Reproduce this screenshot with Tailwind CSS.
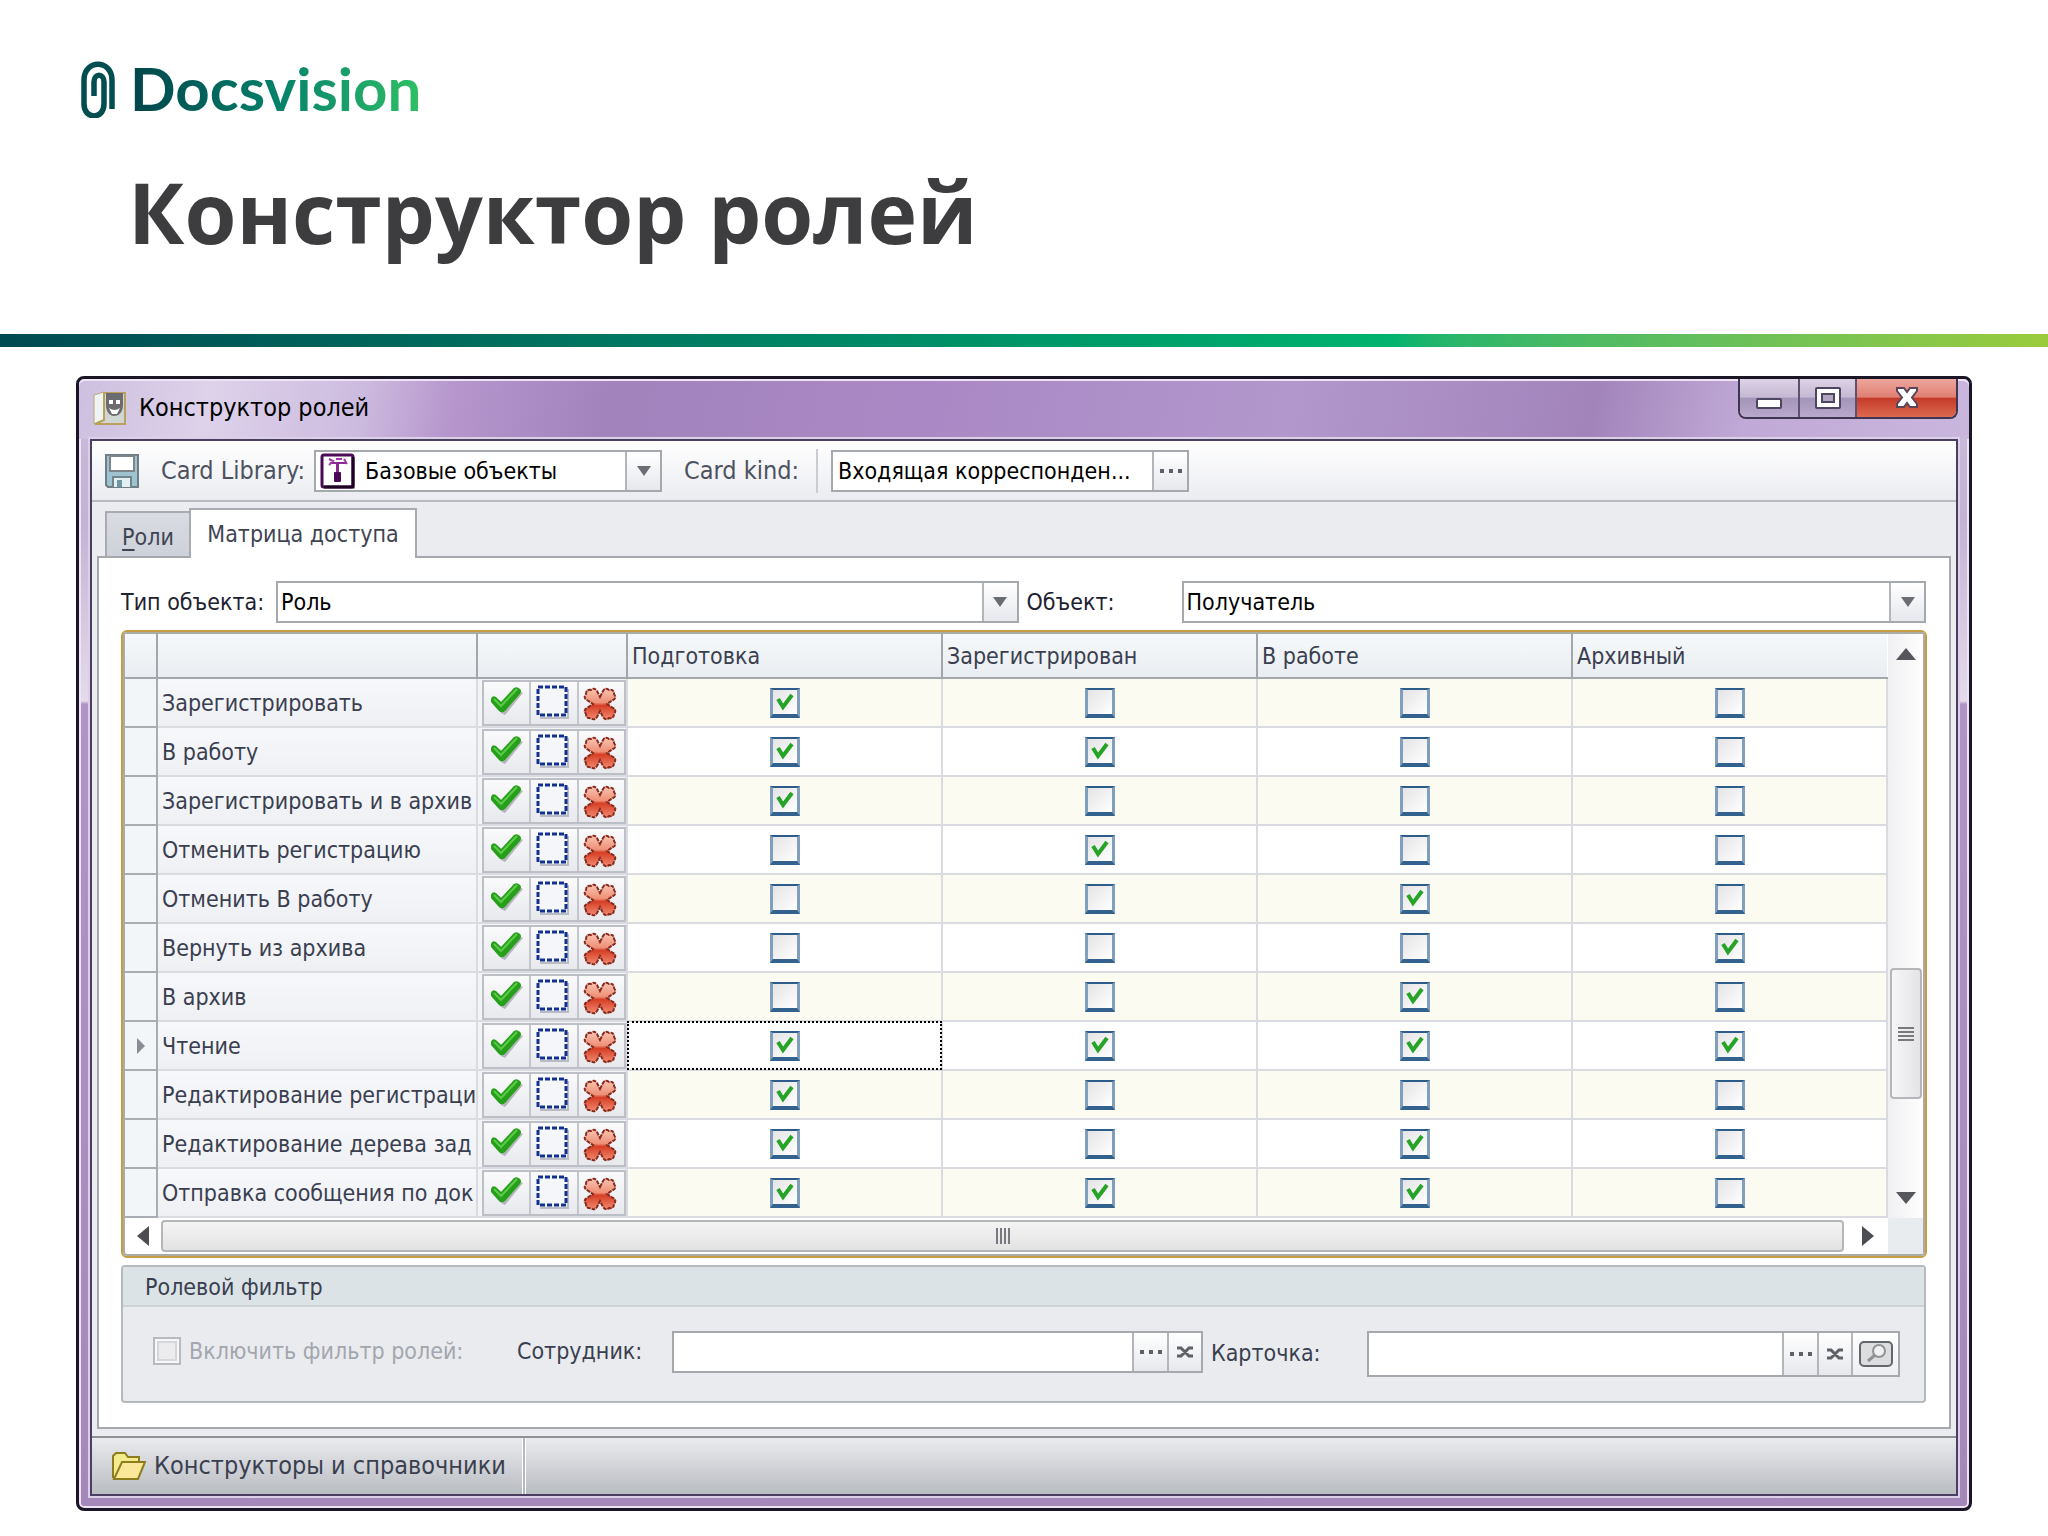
<!DOCTYPE html>
<html lang="ru">
<head>
  <meta charset="UTF-8" />
  <title>Конструктор ролей</title>
  <script src="https://cdn.jsdelivr.net/npm/@tailwindcss/browser@4"></script>
</head>
<body class="bg-white min-h-screen pb-6 font-['DejaVu_Sans_Condensed','Noto_Sans',sans-serif] text-[23px] leading-8 text-[#3a3f50]">

  <header>
    <div class="flex items-center gap-3.5 pl-20 pt-[52px]">
      <svg class="w-9 h-[60px]" viewBox="0 0 36 60" fill="none" stroke="#014d50" stroke-width="5.500">
        <path d="M32 51V22C32 1 4 1 4 22V46C4 62 24 62 24 46V24C24 15 14 15 14 24V38" />
      </svg>
      <span class="font-['Lato',sans-serif] font-bold text-[60px] leading-[72px] bg-linear-to-r from-[#01454b] via-[#04806a] to-[#2fc063] bg-clip-text text-transparent">Docsvision</span>
    </div>
    <h1 class="pl-32 pt-8 pb-[66px] font-['Open_Sans',sans-serif] font-bold text-[84px] leading-[112px] text-[#3d3d3f]">Конструктор ролей</h1>
    <div class="h-[13px] bg-linear-to-r from-[#004a52] via-[#00b36e] via-68% to-[#9acb3b]"></div>
  </header>

  <main class="mx-[76px] mt-[29px] rounded-lg border-[3px] border-[#1b1626] bg-[linear-gradient(#cdbfdc_0px,#c3b2d3_140px,#e4dbec_322px,#b094c8_325px,#a388b9_100%)] shadow-[inset_0_0_0_2px_#eee4f6]">

    <!-- title bar -->
    <div class="flex items-start justify-between pl-3.5 pr-[11px] h-[60px] rounded-t-md shadow-[inset_0_2px_0_#eee4f6] bg-[linear-gradient(100deg,#cdbfdf_0%,#ddd2ea_7%,#cdbbdf_15%,#b595cc_20%,#a283bc_28%,#aa88c5_45%,#b197cc_64%,#a284bb_80%,#c0a9d6_88%,#c9b6dd_100%)]">
      <div class="flex items-center gap-3 pt-3">
        <svg class="w-[34px] h-[34px]" viewBox="0 0 34 34">
          <path d="M1 4L11 1V29L1 33Z" fill="#eef4f2" stroke="#b9a97c" />
          <path d="M11 2H32V33H2L11 29Z" fill="#cfd6d4" stroke="#b9a05c" stroke-width="2" />
          <path d="M13 2H30V14C30 22 25 25 21 25C17 25 13 21 13 14Z" fill="#6b6b70" />
          <path d="M16 9H20V13H16ZM23 9H27V13H23ZM16 17Q21.500 21 27 17L24 23H19Z" fill="#fff" />
        </svg>
        <span class="text-[25px] text-black">Конструктор ролей</span>
      </div>
      <div class="flex h-10 rounded-b-lg border-2 border-t-0 border-[#3f3550] overflow-hidden">
        <button aria-label="Свернуть" class="w-[60px] border-r-2 border-[#5c5270] flex items-center justify-center bg-[linear-gradient(#ddd3e6_0%,#c5b8d3_48%,#a395b8_50%,#b9a9cc_100%)]">
          <svg class="w-7 h-7" viewBox="0 0 28 28"><rect x="2" y="15" width="24" height="9" rx="1" fill="#fff" stroke="#4c4660" stroke-width="2" /></svg>
        </button>
        <button aria-label="Развернуть" class="w-[57px] border-r-2 border-[#5c5270] flex items-center justify-center bg-[linear-gradient(#ddd3e6_0%,#c5b8d3_48%,#a395b8_50%,#b9a9cc_100%)]">
          <svg class="w-7 h-7" viewBox="0 0 28 28" stroke="#4c4660" stroke-width="2"><rect x="2" y="4" width="24" height="20" rx="1" fill="#fff" /><rect x="8" y="10" width="12" height="8" fill="#b1a5c2" /></svg>
        </button>
        <button aria-label="Закрыть" class="w-[99px] flex items-center justify-center bg-[linear-gradient(#eda69c_0%,#e07f73_48%,#c43a28_50%,#dd6a50_100%)]">
          <svg class="w-7 h-7" viewBox="0 0 28 28"><path d="M4 4H11L14 8L17 4H24V7L19 13.500L24 20V23H17L14 19L11 23H4V20L9 13.500L4 7Z" fill="#fff" stroke="#5a4658" stroke-width="2" /></svg>
        </button>
      </div>
    </div>

    <div class="mx-[11px] mb-3 border-2 border-[#4b3f61] bg-[#ebecf0] outline-2 outline-[#dccfe8]">

      <!-- toolbar -->
      <div class="flex items-center h-[61px] pl-[13px] border-b-2 border-[#b7bac0] bg-linear-to-b from-white to-[#ebecf1]">
        <button aria-label="Сохранить">
          <svg class="w-[34px] h-[34px]" viewBox="0 0 34 34">
            <path d="M1 1H33V33H3L1 31Z" fill="#9cc3cf" stroke="#6e7d86" stroke-width="2" />
            <rect x="5" y="2" width="24" height="15" fill="#fff" stroke="#7d8589" stroke-width="2" />
            <path d="M8 33V23H26V33" fill="#e4eff2" stroke="#71858d" stroke-width="2" />
            <rect x="12" y="26" width="5" height="7" fill="#6f95a3" />
          </svg>
        </button>
        <label for="library" class="w-[175px] pl-[22px] whitespace-nowrap text-[25px] text-[#4c5260]">Card Library:</label>
        <div class="flex w-[348px] h-[42px] border-2 border-[#a5a8ad] bg-white">
          <svg class="w-9 h-9 ml-1 mt-px shrink-0" viewBox="0 0 36 36">
            <rect x="2" y="2" width="31" height="32" rx="2" fill="#fff" stroke="#4a0a55" stroke-width="3" />
            <path d="M33 4V34H4" fill="none" stroke="#1d0024" stroke-width="3" />
            <path d="M10 9H26V11H10ZM16 10H19V20H16Z" fill="#8a2a94" />
            <path d="M9 6L13 8L9 12M16 6H22M24 6L27 11" fill="none" stroke="#a03aa8" stroke-width="2" />
            <rect x="14" y="19" width="7" height="10" rx="1" fill="#4a0a55" />
          </svg>
          <select id="library" class="appearance-none min-w-0 flex-1 pl-[9px] text-black"><option>Базовые объекты</option></select>
          <span class="w-[35px] flex items-center justify-center border-l-2 border-[#b2b5ba] bg-linear-to-b from-white to-[#e6e8ed]">
            <svg class="w-4 h-2.5" viewBox="0 0 16 10"><path d="M1 0H15L8 10Z" fill="#6a6d73" /></svg>
          </span>
        </div>
        <label for="kind" class="w-[154px] pl-[22px] whitespace-nowrap text-[25px] text-[#4c5260]">Card kind:</label>
        <span class="w-[15px] h-11 border-l-2 border-[#c9ccd2]"></span>
        <div class="flex w-[358px] h-[42px] border-2 border-[#a5a8ad] bg-white">
          <input id="kind" value="Входящая корреспонден..." class="min-w-0 flex-1 pl-[5px] text-black" />
          <button aria-label="Выбрать вид" class="w-[35px] flex items-center justify-center border-l-2 border-[#b2b5ba] bg-linear-to-b from-white to-[#e6e8ed]">
            <svg class="w-6 h-1" viewBox="0 0 24 4" fill="#5d6066"><path d="M1 0H5V4H1ZM10 0H14V4H10ZM19 0H23V4H19Z" /></svg>
          </button>
        </div>
      </div>

      <!-- tabs -->
      <div class="flex items-end h-[54px] pt-1.5 pl-[13px]">
        <button class="w-[84px] h-[45px] pt-1 border-2 border-r-0 border-b-0 border-[#a9abb1] bg-linear-to-b from-[#d9dce2] to-[#cdd1d9] text-[#3f4453]"><span class="underline underline-offset-4">Р</span>оли</button>
        <button class="w-[228px] h-[50px] -mb-0.5 relative border-2 border-b-0 border-[#a9abb1] bg-white text-[#3f4453]">Матрица доступа</button>
      </div>

      <section class="mx-[5px] mb-[7px] px-[22px] pt-[23px] pb-6 border-2 border-[#a5a8ac] bg-white">
        <div class="flex items-center pr-px text-black">
          <label for="type" class="w-[155px] whitespace-nowrap text-[#1d2130]">Тип объекта:</label>
          <div class="flex grow basis-0 h-[42px] border-2 border-[#a5a8ad] bg-white">
            <select id="type" class="appearance-none min-w-0 flex-1 pl-[3px]"><option>Роль</option></select>
            <span class="w-[35px] flex items-center justify-center border-l-2 border-[#b2b5ba] bg-linear-to-b from-white to-[#e6e8ed]">
              <svg class="w-4 h-2.5" viewBox="0 0 16 10"><path d="M1 0H15L8 10Z" fill="#6a6d73" /></svg>
            </span>
          </div>
          <label for="object" class="w-[163px] pl-2 whitespace-nowrap text-[#1d2130]">Объект:</label>
          <div class="flex grow basis-1.5 h-[42px] border-2 border-[#a5a8ad] bg-white">
            <select id="object" class="appearance-none min-w-0 flex-1 pl-[3px]"><option>Получатель</option></select>
            <span class="w-[35px] flex items-center justify-center border-l-2 border-[#b2b5ba] bg-linear-to-b from-white to-[#e6e8ed]">
              <svg class="w-4 h-2.5" viewBox="0 0 16 10"><path d="M1 0H15L8 10Z" fill="#6a6d73" /></svg>
            </span>
          </div>
        </div>

        <!-- access matrix -->
        <div class="mt-[7px] rounded-md border-2 border-[#c79c45]">
          <div class="rounded-sm border-2 border-[#a9ada6]">
            <div class="flex">
              <table class="flex-1 w-full table-fixed border-collapse">
                <colgroup>
                  <col class="w-8" /><col class="w-80" /><col class="w-[150px]" /><col /><col /><col /><col />
                </colgroup>
                <thead>
                  <tr class="h-11 bg-linear-to-b from-[#f6f9fb] to-[#e9edf1] text-left">
                    <td class="border-r-2 border-b-2 border-[#a3a7ac]"></td>
                    <td class="border-r-2 border-b-2 border-[#a3a7ac]"></td>
                    <td class="border-r-2 border-b-2 border-[#a3a7ac]"></td>
                    <th class="pl-1 font-normal border-r-2 border-b-2 border-[#a3a7ac]">Подготовка</th>
                    <th class="pl-1 font-normal border-r-2 border-b-2 border-[#a3a7ac]">Зарегистрирован</th>
                    <th class="pl-1 font-normal border-r-2 border-b-2 border-[#a3a7ac]">В работе</th>
                    <th class="pl-1 font-normal border-b-2 border-[#a3a7ac]">Архивный</th>
                  </tr>
                </thead>
                <tbody id="matrix"></tbody>
              </table>
              <div class="w-[35px] flex flex-col items-center py-3.5 bg-linear-to-r from-[#f0eff1] to-white">
                <svg class="w-5 h-3" viewBox="0 0 20 12"><path d="M10 0L20 12H0Z" fill="#55575c" /></svg>
                <div class="mt-[308px] w-8 h-[131px] flex flex-col items-center justify-center gap-0.5 rounded-sm border-2 border-[#b4b6ba] bg-linear-to-r from-[#f6f6f7] to-[#e4e4e6]">
                  <span class="w-4 h-0.5 bg-[#77797e]"></span><span class="w-4 h-0.5 bg-[#77797e]"></span><span class="w-4 h-0.5 bg-[#77797e]"></span><span class="w-4 h-0.5 bg-[#77797e]"></span>
                </div>
                <svg class="mt-auto w-5 h-3" viewBox="0 0 20 12"><path d="M0 0H20L10 12Z" fill="#55575c" /></svg>
              </div>
            </div>
            <div class="flex items-center h-9 pl-3">
              <svg class="w-3 h-5" viewBox="0 0 12 20"><path d="M12 0V20L0 10Z" fill="#4c4e53" /></svg>
              <div class="ml-3 flex-1 h-8 flex items-center justify-center gap-0.5 rounded-sm border-2 border-[#b4b6ba] bg-linear-to-b from-[#f4f4f4] to-[#e3e3e4]">
                <span class="w-0.5 h-4 bg-[#77797e]"></span><span class="w-0.5 h-4 bg-[#77797e]"></span><span class="w-0.5 h-4 bg-[#77797e]"></span><span class="w-0.5 h-4 bg-[#77797e]"></span>
              </div>
              <svg class="ml-[18px] mr-3.5 w-3 h-5" viewBox="0 0 12 20"><path d="M0 0V20L12 10Z" fill="#4c4e53" /></svg>
              <span class="w-[35px] h-full bg-[#e9ecef]"></span>
            </div>
          </div>
        </div>

        <!-- role filter -->
        <div class="mt-[7px] mr-px rounded-sm border-2 border-[#b5b8bd] bg-[#e9ebef]">
          <h2 class="h-10 pl-[22px] pt-1 border-b-2 border-[#cdd3d7] bg-[#dce3e6]">Ролевой фильтр</h2>
          <div class="flex items-start pt-6 pb-6 pl-[30px] pr-6">
            <label class="flex items-center gap-2 h-10 w-[364px] whitespace-nowrap text-[#a3a6ae]">
              <input type="checkbox" disabled class="appearance-none w-7 h-7 border-2 border-[#b7babf] bg-[#ececee] shadow-[inset_0_0_0_2px_#f7f7f8,inset_0_0_0_4px_#d5d6d9]" />
              Включить фильтр ролей:
            </label>
            <label for="employee" class="w-[155px] pt-1 whitespace-nowrap">Сотрудник:</label>
            <div class="flex grow basis-0 h-[42px] border-2 border-[#a5a8ad] bg-white">
              <input id="employee" class="min-w-0 flex-1 pl-1" />
              <button aria-label="Выбрать сотрудника" class="w-[35px] flex items-center justify-center border-l-2 border-[#b2b5ba] bg-linear-to-b from-white to-[#e6e8ed]">
                <svg class="w-6 h-1" viewBox="0 0 24 4" fill="#5d6066"><path d="M1 0H5V4H1ZM10 0H14V4H10ZM19 0H23V4H19Z" /></svg>
              </button>
              <button aria-label="Очистить сотрудника" class="w-[34px] flex items-center justify-center border-l-2 border-[#b2b5ba] bg-linear-to-b from-white to-[#e6e8ed]">
                <svg class="w-[18px] h-3" viewBox="0 0 18 12"><path d="M1 2H5L13 10H17M1 10H5L13 2H17" fill="none" stroke="#5d6066" stroke-width="3" /></svg>
              </button>
            </div>
            <label for="card" class="w-[164px] pl-2 pt-1.5 whitespace-nowrap">Карточка:</label>
            <div class="flex grow basis-1.5 h-[46px] border-2 border-[#a5a8ad] bg-white">
              <input id="card" class="min-w-0 flex-1 pl-1" />
              <button aria-label="Выбрать карточку" class="w-[35px] flex items-center justify-center border-l-2 border-[#b2b5ba] bg-linear-to-b from-white to-[#e6e8ed]">
                <svg class="w-6 h-1" viewBox="0 0 24 4" fill="#5d6066"><path d="M1 0H5V4H1ZM10 0H14V4H10ZM19 0H23V4H19Z" /></svg>
              </button>
              <button aria-label="Очистить карточку" class="w-[34px] flex items-center justify-center border-l-2 border-[#b2b5ba] bg-linear-to-b from-white to-[#e6e8ed]">
                <svg class="w-[18px] h-3" viewBox="0 0 18 12"><path d="M1 2H5L13 10H17M1 10H5L13 2H17" fill="none" stroke="#5d6066" stroke-width="3" /></svg>
              </button>
              <button aria-label="Открыть карточку" class="w-[47px] flex items-center justify-center border-l-2 border-[#b2b5ba] bg-linear-to-b from-white to-[#eeeff2]">
                <svg class="w-9 h-7" viewBox="0 0 36 28" fill="none"><rect x="2" y="2" width="32" height="24" rx="4" fill="#dcdddf" stroke="#63666b" stroke-width="2" /><ellipse cx="21" cy="11" rx="6" ry="6" fill="#f0f0f1" stroke="#8f9296" stroke-width="2" /><path d="M17 15L10 21" stroke="#8f9296" stroke-width="3" /></svg>
              </button>
            </div>
          </div>
        </div>
      </section>

      <!-- status bar -->
      <footer class="flex items-center h-[58px] pl-5 border-t-2 border-[#8e9297] bg-linear-to-b from-[#eaebef] to-[#b9bcc1]">
        <svg class="w-[34px] h-7" viewBox="0 0 34 28" stroke="#8c7d1c" stroke-width="2">
          <path d="M1 26V4L4 1H13L16 5H27V10" fill="#f3eb8c" />
          <path d="M2 27L10 10H33L26 27Z" fill="#fbe79a" />
        </svg>
        <span class="pl-2 text-[25px]">Конструкторы и справочники</span>
        <span class="ml-4 h-full w-1 border-x border-x-white bg-[#b5b8be]"></span>
      </footer>
    </div>
  </main>

  <!-- shared fill for the row icons -->
  <svg class="absolute w-0 h-0" aria-hidden="true">
    <linearGradient id="deny" x1="0" y1="0" x2="0" y2="1">
      <stop offset="0" stop-color="#f9c4b0" />
      <stop offset=".45" stop-color="#ee9078" />
      <stop offset=".55" stop-color="#d63f26" />
      <stop offset="1" stop-color="#f08a70" />
    </linearGradient>
  </svg>

  <script>
    // [operation, state flags in column order]
    const rows = [
      ["Зарегистрировать", [1, 0, 0, 0]],
      ["В работу", [1, 1, 0, 0]],
      ["Зарегистрировать и в архив", [1, 0, 0, 0]],
      ["Отменить регистрацию", [0, 1, 0, 0]],
      ["Отменить В работу", [0, 0, 1, 0]],
      ["Вернуть из архива", [0, 0, 0, 1]],
      ["В архив", [0, 0, 1, 0]],
      ["Чтение", [1, 1, 1, 1]],
      ["Редактирование регистраци", [1, 0, 0, 0]],
      ["Редактирование дерева зад", [1, 0, 1, 0]],
      ["Отправка сообщения по док", [1, 1, 1, 0]],
    ];
    const states = ["Подготовка", "Зарегистрирован", "В работе", "Архивный"];
    const current = 7;

    const button = "flex-1 flex items-center justify-center bg-linear-to-b from-[#fafafb] to-[#e7e9ed]";

    const actions = `
      <div class="flex h-[46px] ml-1 border-2 border-[#bcbfc6] divide-x-2 divide-[#c3c6cc]">
        <button aria-label="Разрешить все" class="${button}">
          <svg class="w-9 h-9" viewBox="0 0 36 36">
            <path d="M5 17L9 14L14 18L28 5L34 8L16 30L12 28Z" fill="#8b8e94" opacity=".6" />
            <path d="M2 14Q3 10 7 12L12 17L25 3Q28 1 31 4Q33 6 31 9L16 26Q12 29 9 25L2 17Z" fill="#26a01a" />
            <path d="M5 14L12 21L28 4" fill="none" stroke="#5ccb48" stroke-width="2" />
          </svg>
        </button>
        <button aria-label="Сбросить все" class="${button}">
          <svg class="w-9 h-9" viewBox="0 0 36 36">
            <path d="M4 33H32V4" fill="none" stroke="#b9bcc4" stroke-width="2" />
            <rect x="2" y="2" width="28" height="28" fill="#f4f6f9" stroke="#12308f" stroke-width="3" stroke-dasharray="5 2" />
          </svg>
        </button>
        <button aria-label="Запретить все" class="${button}">
          <svg class="w-9 h-9" viewBox="0 0 36 36">
            <path d="M17 12L20 6Q23 2 26 5Q31 4 31 9Q34 13 30 15L24 19L30 23Q34 25 31 29Q31 34 26 33Q23 36 20 32L17 26L14 32Q11 36 8 33Q3 34 3 29Q0 25 4 23L10 19L4 15Q0 13 3 9Q3 4 8 5Q11 2 14 6Z" fill="url(#deny)" stroke="#8a2a1c" stroke-width="2" stroke-dasharray="4 1" />
          </svg>
        </button>
      </div>`;

    const check = (name, state, on) => `
      <label class="relative block w-[30px] h-[30px] mx-auto">
        <input type="checkbox" aria-label="${name}: ${state}" ${on ? "checked" : ""}
          class="peer block appearance-none w-[30px] h-[30px] border-x-3 border-t-2 border-b-4 border-x-[#7f9fbd] border-t-[#2d5c8a] border-b-[#34628f] bg-linear-to-br from-[#e4e4e6] to-white" />
        <svg class="hidden peer-checked:block absolute left-0 top-0 w-[30px] h-[30px]" viewBox="0 0 30 30">
          <path d="M8 11L13 19L22 7" fill="none" stroke="#27a327" stroke-width="4" />
        </svg>
      </label>`;

    document.getElementById("matrix").innerHTML = rows.map(([name, flags], i) => `
      <tr class="h-[49px] ${i % 2 ? "bg-white" : "bg-[#fbfbf1]"}">
        <td class="border-r-2 border-b-2 border-[#a9adb2] bg-[#f3f6f9]">
          ${i === current ? '<svg class="ml-3 w-2 h-4" viewBox="0 0 8 16"><path d="M0 0L8 8L0 16Z" fill="#8a8d93" /></svg>' : ""}
        </td>
        <td class="pl-1 whitespace-nowrap overflow-hidden border-r-2 border-b-2 border-[#d9dbe0] bg-linear-to-b from-[#f7f8fb] to-[#eff0f3]">${name}</td>
        <td class="border-r-2 border-b-2 border-[#d9dbe0] bg-[#f3f4f6]">${actions}</td>
        ${flags.map((on, j) => `
        <td class="border-r-2 border-b-2 border-[#d9dbe0] ${i === current && j === 0 ? "outline-2 outline-dotted -outline-offset-2 outline-black" : ""}">${check(name, states[j], on)}</td>`).join("")}
      </tr>`).join("");
  </script>
</body>
</html>
